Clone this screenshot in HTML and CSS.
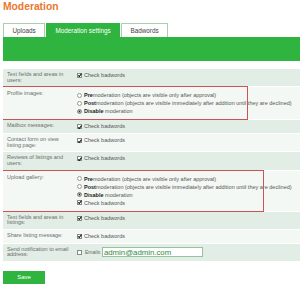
FILE: index.html
```html
<!DOCTYPE html>
<html lang="en">
<head>
    <meta charset="UTF-8">
    <title>Moderation</title>
    <link rel="stylesheet" href="styles.css">
</head>
<body>
    <h1 class="title">Moderation</h1>
    <ul class="tabs">
        <li class="tab">Uploads</li>
        <li class="tab active">Moderation settings</li>
        <li class="tab">Badwords</li>
    </ul>
    <div class="tab-bar"></div>

    <div class="settings">
        <div class="row">
            <div class="label">Text fields and areas in users:</div>
            <div class="control"><div class="opt"><span class="check on"></span>Check badwords</div></div>
        </div>
        <div class="row alt group marked">
            <div class="label">Profile images:</div>
            <div class="control">
                <div class="opt"><span class="radio"></span><b>Pre</b>moderation (objects are visible only after approval)</div>
                <div class="opt"><span class="radio"></span><b>Post</b>moderation (objects are visible immediately after addition until they are declined)</div>
                <div class="opt"><span class="radio on"></span><b>Disable</b>&nbsp;moderation</div>
            </div>
            <span class="mark mark-profile"></span>
        </div>
        <div class="row">
            <div class="label">Mailbox messages:</div>
            <div class="control"><div class="opt"><span class="check on"></span>Check badwords</div></div>
        </div>
        <div class="row alt">
            <div class="label">Contact form on view listing page:</div>
            <div class="control"><div class="opt"><span class="check on"></span>Check badwords</div></div>
        </div>
        <div class="row">
            <div class="label">Reviews of listings and users:</div>
            <div class="control"><div class="opt"><span class="check on"></span>Check badwords</div></div>
        </div>
        <div class="row alt group marked">
            <div class="label">Upload gallery:</div>
            <div class="control">
                <div class="opt"><span class="radio"></span><b>Pre</b>moderation (objects are visible only after approval)</div>
                <div class="opt"><span class="radio"></span><b>Post</b>moderation (objects are visible immediately after addition until they are declined)</div>
                <div class="opt"><span class="radio on"></span><b>Disable</b>&nbsp;moderation</div>
                <div class="opt"><span class="check on"></span>Check badwords</div>
            </div>
            <span class="mark mark-gallery"></span>
        </div>
        <div class="row">
            <div class="label">Text fields and areas in listings:</div>
            <div class="control"><div class="opt"><span class="check on"></span>Check badwords</div></div>
        </div>
        <div class="row alt">
            <div class="label">Share listing message:</div>
            <div class="control"><div class="opt"><span class="check on"></span>Check badwords</div></div>
        </div>
        <div class="row">
            <div class="label">Send notification to email address:</div>
            <div class="control email">
                <span class="check"></span>
                <span class="email-label">Emails:</span>
                <input class="email-input" type="text" value="admin@admin.com">
            </div>
        </div>
    </div>

    <button class="save">Save</button>
</body>
</html>
```

FILE: styles.css
```css
body {
    margin: 0 0 0 3px;
    font-family: "Liberation Sans", Arial, sans-serif;
    background: #fff;
    overflow: hidden;
}
.title {
    margin: 1px 0 0;
    font-size: 10.3px;
    line-height: 12px;
    color: #e8782c;
}

/* Tabs */
.tabs {
    display: flex;
    gap: 1px;
    list-style: none;
    margin: 10px 0 0;
    padding: 0;
}
.tab {
    box-sizing: border-box;
    height: 14px;
    padding: 0 8.5px;
    border: 1px solid #a9cfaf;
    border-bottom: 0;
    background: #fff;
    color: #3d3d3d;
    font-size: 6.3px;
    line-height: 13px;
}
.tab.active {
    background: #2eb43f;
    border-color: #2eb43f;
    color: #fff;
}
.tab-bar {
    height: 24px;
    background: #2eb43f;
}

/* Settings table */
.settings {
    margin-top: 8px;
}
.row {
    display: grid;
    grid-template-columns: 74px 1fr;
    padding: 3px 0;
    margin-bottom: 1px;
    background: #e2eee5;
    font-size: 5.5px;
}
.row.alt {
    background: #f3f8f4;
}
.row.group {
    padding: 4px 0;
}
.label {
    padding-left: 4px;
    padding-right: 6px;
    line-height: 5.6px;
    color: #6d6d6d;
}
.control {
    color: #555;
}
.opt {
    display: flex;
    align-items: center;
    line-height: 7px;
    white-space: nowrap;
}
.group .opt {
    line-height: 8px;
}
.opt b {
    color: #222;
}
.check,
.radio {
    position: relative;
    flex: none;
    box-sizing: border-box;
    width: 5px;
    height: 5px;
    margin-right: 2px;
    border: 1px solid #8a8a8a;
    background: #fff;
}
.radio {
    border-radius: 50%;
    border-color: #9a9a9a;
}
.radio.on {
    background: #222;
    box-shadow: inset 0 0 0 0.6px #fff;
}
.check.on::after {
    content: "";
    position: absolute;
    left: 0.8px;
    top: -0.6px;
    width: 1.3px;
    height: 2.6px;
    border: solid #111;
    border-width: 0 1.1px 1.1px 0;
    transform: rotate(40deg);
}

/* red annotation frames */
.marked {
    position: relative;
}
.mark {
    position: absolute;
    top: -1px;
    bottom: -1px;
    left: -1px;
    border: 1px solid #cc5356;
    pointer-events: none;
}
.mark-profile {
    width: 244px;
}
.mark-gallery {
    width: 260px;
}

/* email row */
.control.email {
    display: flex;
    align-items: center;
}
.email-label {
    margin-left: 1px;
    margin-right: 0.5px;
    font-size: 5px;
    color: #666;
}
.email-input {
    box-sizing: border-box;
    width: 101px;
    height: 10px;
    padding: 0 1px;
    border: 1px solid #96c39e;
    font-family: "Liberation Sans", Arial, sans-serif;
    font-size: 7.8px;
    color: #2f8a3d;
    outline: none;
}

.save {
    display: block;
    width: 42px;
    height: 13px;
    margin-top: 10px;
    padding: 0;
    border: none;
    background: #2eb43f;
    color: #fff;
    font-family: "Liberation Sans", Arial, sans-serif;
    font-size: 6px;
}
```
